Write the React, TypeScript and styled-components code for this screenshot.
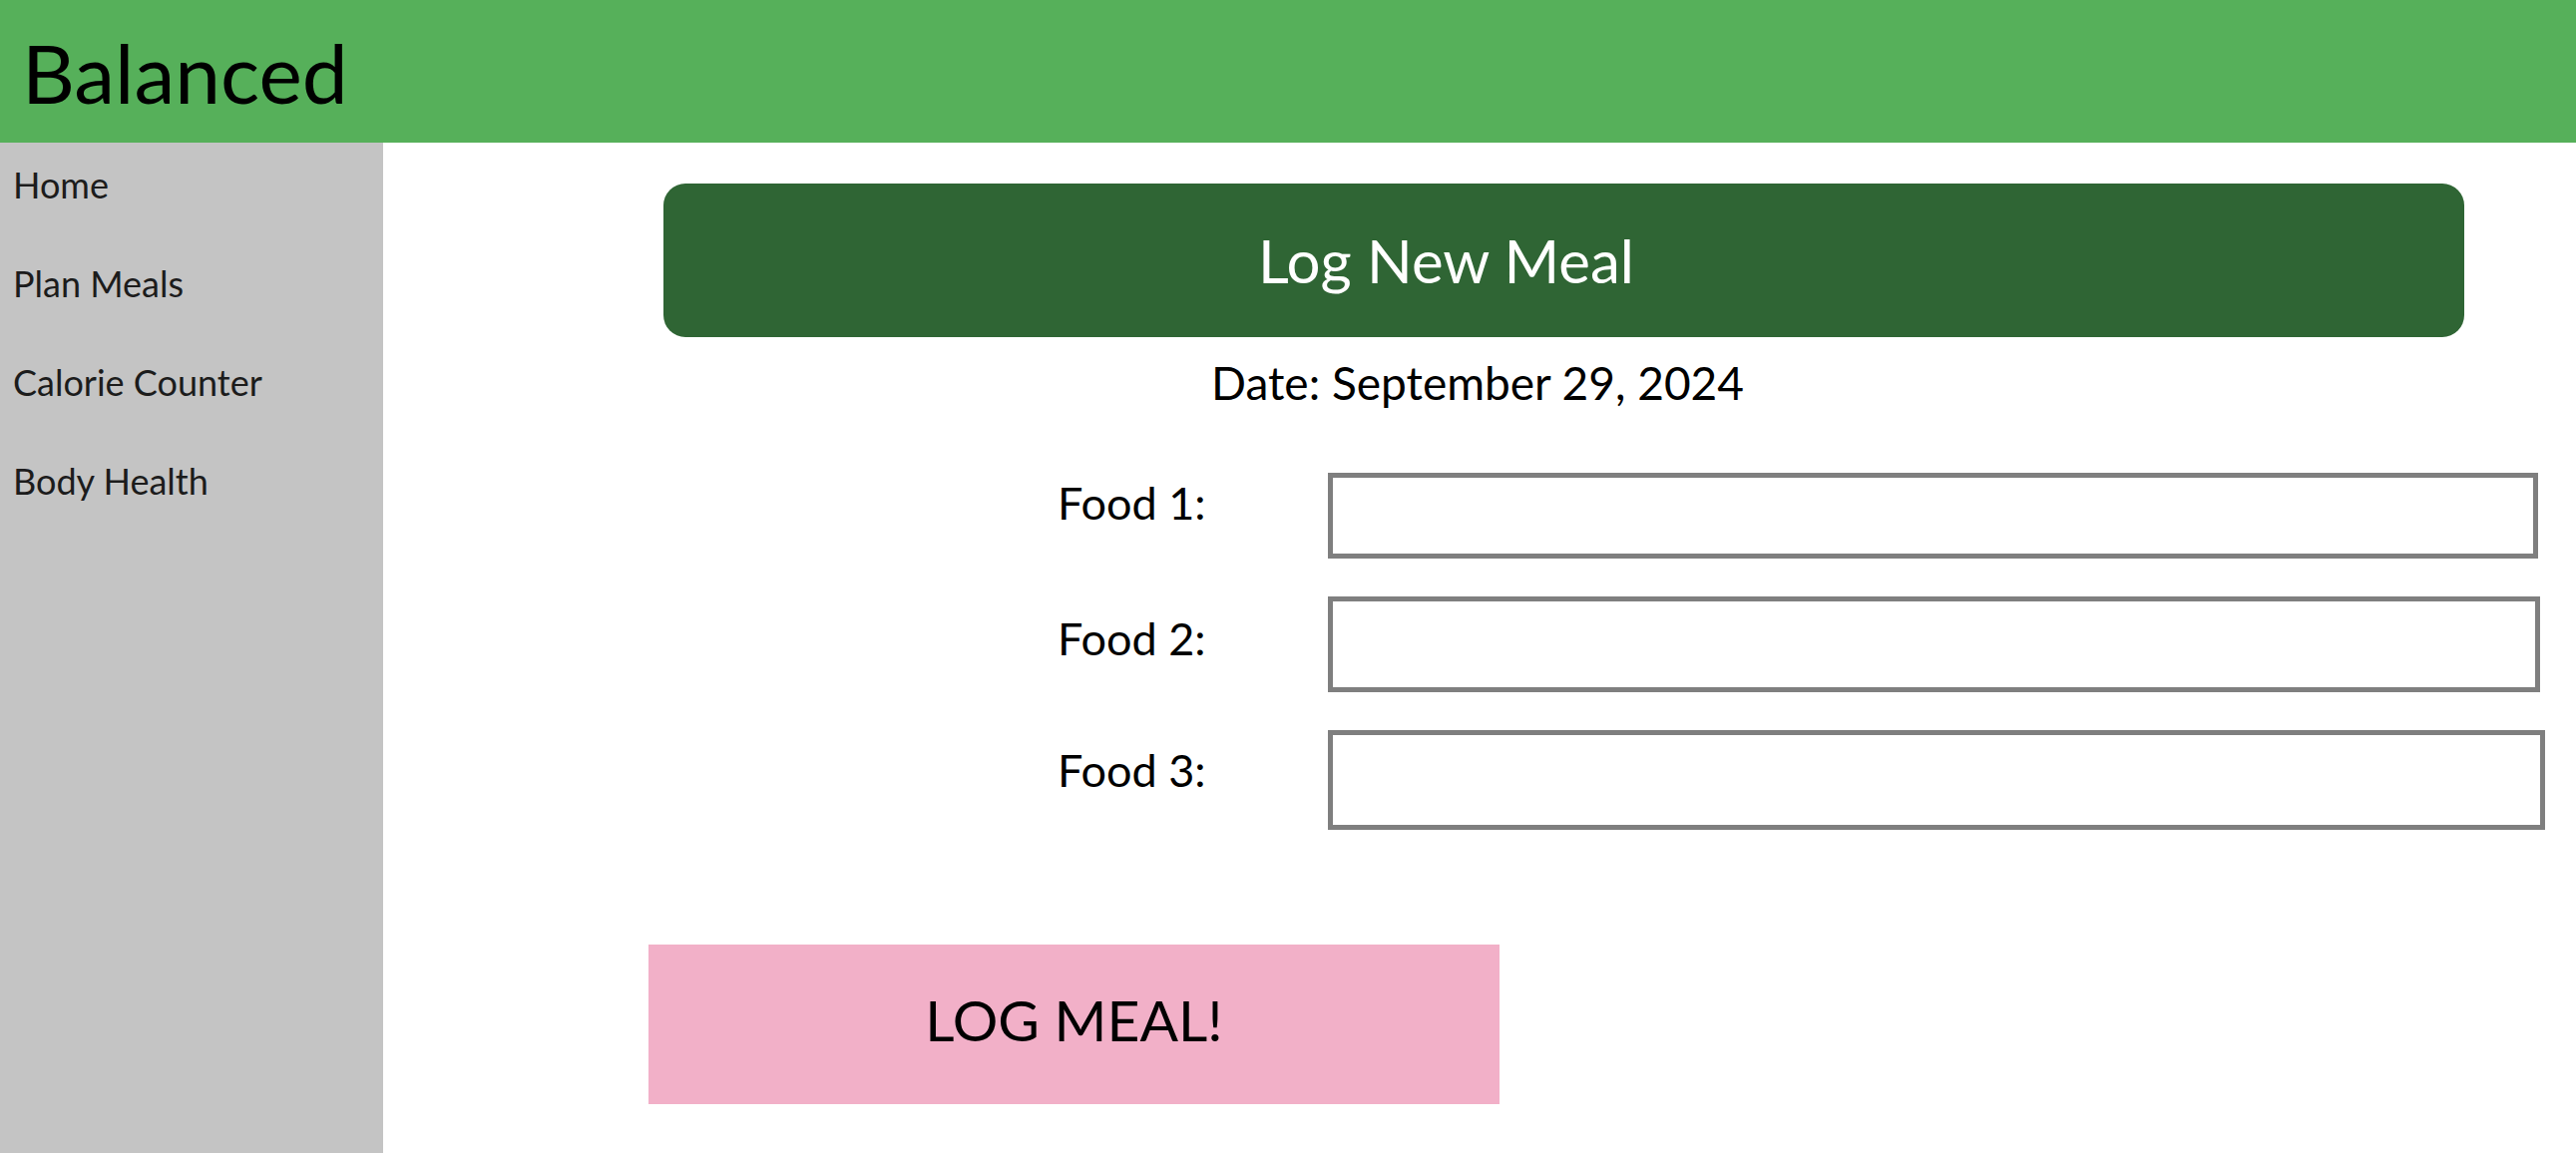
import React from "react";
import styled, { createGlobalStyle } from "styled-components";

/**
 * Meal logging page for Balanced
 * @returns header, side nav and the log new meal form
 */

const GlobalStyle = createGlobalStyle`
  html, body {
    margin: 0;
    padding: 0;
    background: #ffffff;
    font-family: "Lato", "Open Sans", sans-serif;
  }
  * {
    box-sizing: border-box;
  }
`;

const navLinks = ["Home", "Plan Meals", "Calorie Counter", "Body Health"];

// each box (and label) sits a bit differently in the mockup
const foods = [
  { label: "Food 1:", height: 86, width: 1213, nudge: 26 },
  { label: "Food 2:", height: 96, width: 1215, nudge: 12 },
  { label: "Food 3:", height: 100, width: 1220, nudge: 20 },
];

const App: React.FC = () => {
  return (
    <Wrapper>
      <GlobalStyle />
      <Header>
        <Brand>Balanced</Brand>
      </Header>
      <Body>
        <Sidebar>
          {navLinks.map((link) => (
            <NavItem key={link}>{link}</NavItem>
          ))}
        </Sidebar>
        <Main>
          <Banner>
            <BannerTitle>Log New Meal</BannerTitle>
          </Banner>
          <DateLine>Date: September 29, 2024</DateLine>
          <FoodForm>
            {foods.map((food) => (
              <FoodRow key={food.label}>
                <FoodLabel $nudge={food.nudge}>{food.label}</FoodLabel>
                <FoodInput
                  type="text"
                  $height={food.height}
                  $width={food.width}
                />
              </FoodRow>
            ))}
          </FoodForm>
          <LogButton>LOG MEAL!</LogButton>
        </Main>
      </Body>
    </Wrapper>
  );
};

export default App;

const Wrapper = styled.div`
  width: 100vw;
  height: 100vh;
  display: flex;
  flex-direction: column;
  overflow: hidden;
`;

const Header = styled.header`
  height: 143px;
  flex-shrink: 0;
  background-color: #56b05a;
  display: flex;
  align-items: center;
  padding-left: 22px;
`;

const Brand = styled.h1`
  margin: 0;
  font-size: 82px;
  font-weight: 400;
  color: #000000;
  line-height: 1;
`;

const Body = styled.div`
  flex: 1;
  display: flex;
`;

const Sidebar = styled.nav`
  width: 384px;
  flex-shrink: 0;
  background-color: #c4c4c4;
  display: flex;
  flex-direction: column;
  gap: 59px;
  padding: 22px 0 0 13px;
`;

const NavItem = styled.div`
  font-size: 36px;
  line-height: 40px;
  color: #1c1c1c;
`;

const Main = styled.main`
  flex: 1;
  display: flex;
  flex-direction: column;
  padding-top: 41px;
`;

const Banner = styled.div`
  margin-left: 281px;
  width: 1805px;
  height: 154px;
  border-radius: 22px;
  background-color: #2f6534;
  display: flex;
  align-items: center;
  justify-content: center;
  padding-right: 236px;
`;

const BannerTitle = styled.h2`
  margin: 0;
  font-size: 60px;
  font-weight: 400;
  color: #ffffff;
`;

const DateLine = styled.p`
  margin: 18px 0 0 0;
  padding-right: 4px;
  font-size: 46px;
  line-height: 56px;
  text-align: center;
  color: #000000;
`;

const FoodForm = styled.div`
  margin-top: 62px;
  margin-left: 676px;
  display: flex;
  flex-direction: column;
  gap: 38px;
`;

const FoodRow = styled.div`
  display: flex;
  align-items: center;
`;

const FoodLabel = styled.label<{ $nudge: number }>`
  width: 271px;
  flex-shrink: 0;
  font-size: 45px;
  line-height: 56px;
  color: #000000;
  margin-bottom: ${(p) => p.$nudge}px;
`;

const FoodInput = styled.input<{ $height: number; $width: number }>`
  height: ${(p) => p.$height}px;
  width: ${(p) => p.$width}px;
  border: 5px solid #7f7f7f;
  background: #ffffff;
  outline: none;
  font-family: inherit;
  font-size: 40px;
  padding: 0 16px;
`;

const LogButton = styled.button`
  margin-top: 115px;
  margin-left: 266px;
  width: 853px;
  height: 160px;
  border: none;
  padding: 0 0 10px 0;
  background-color: #f2b0c8;
  font-family: inherit;
  font-size: 57px;
  color: #000000;
  cursor: pointer;
`;
